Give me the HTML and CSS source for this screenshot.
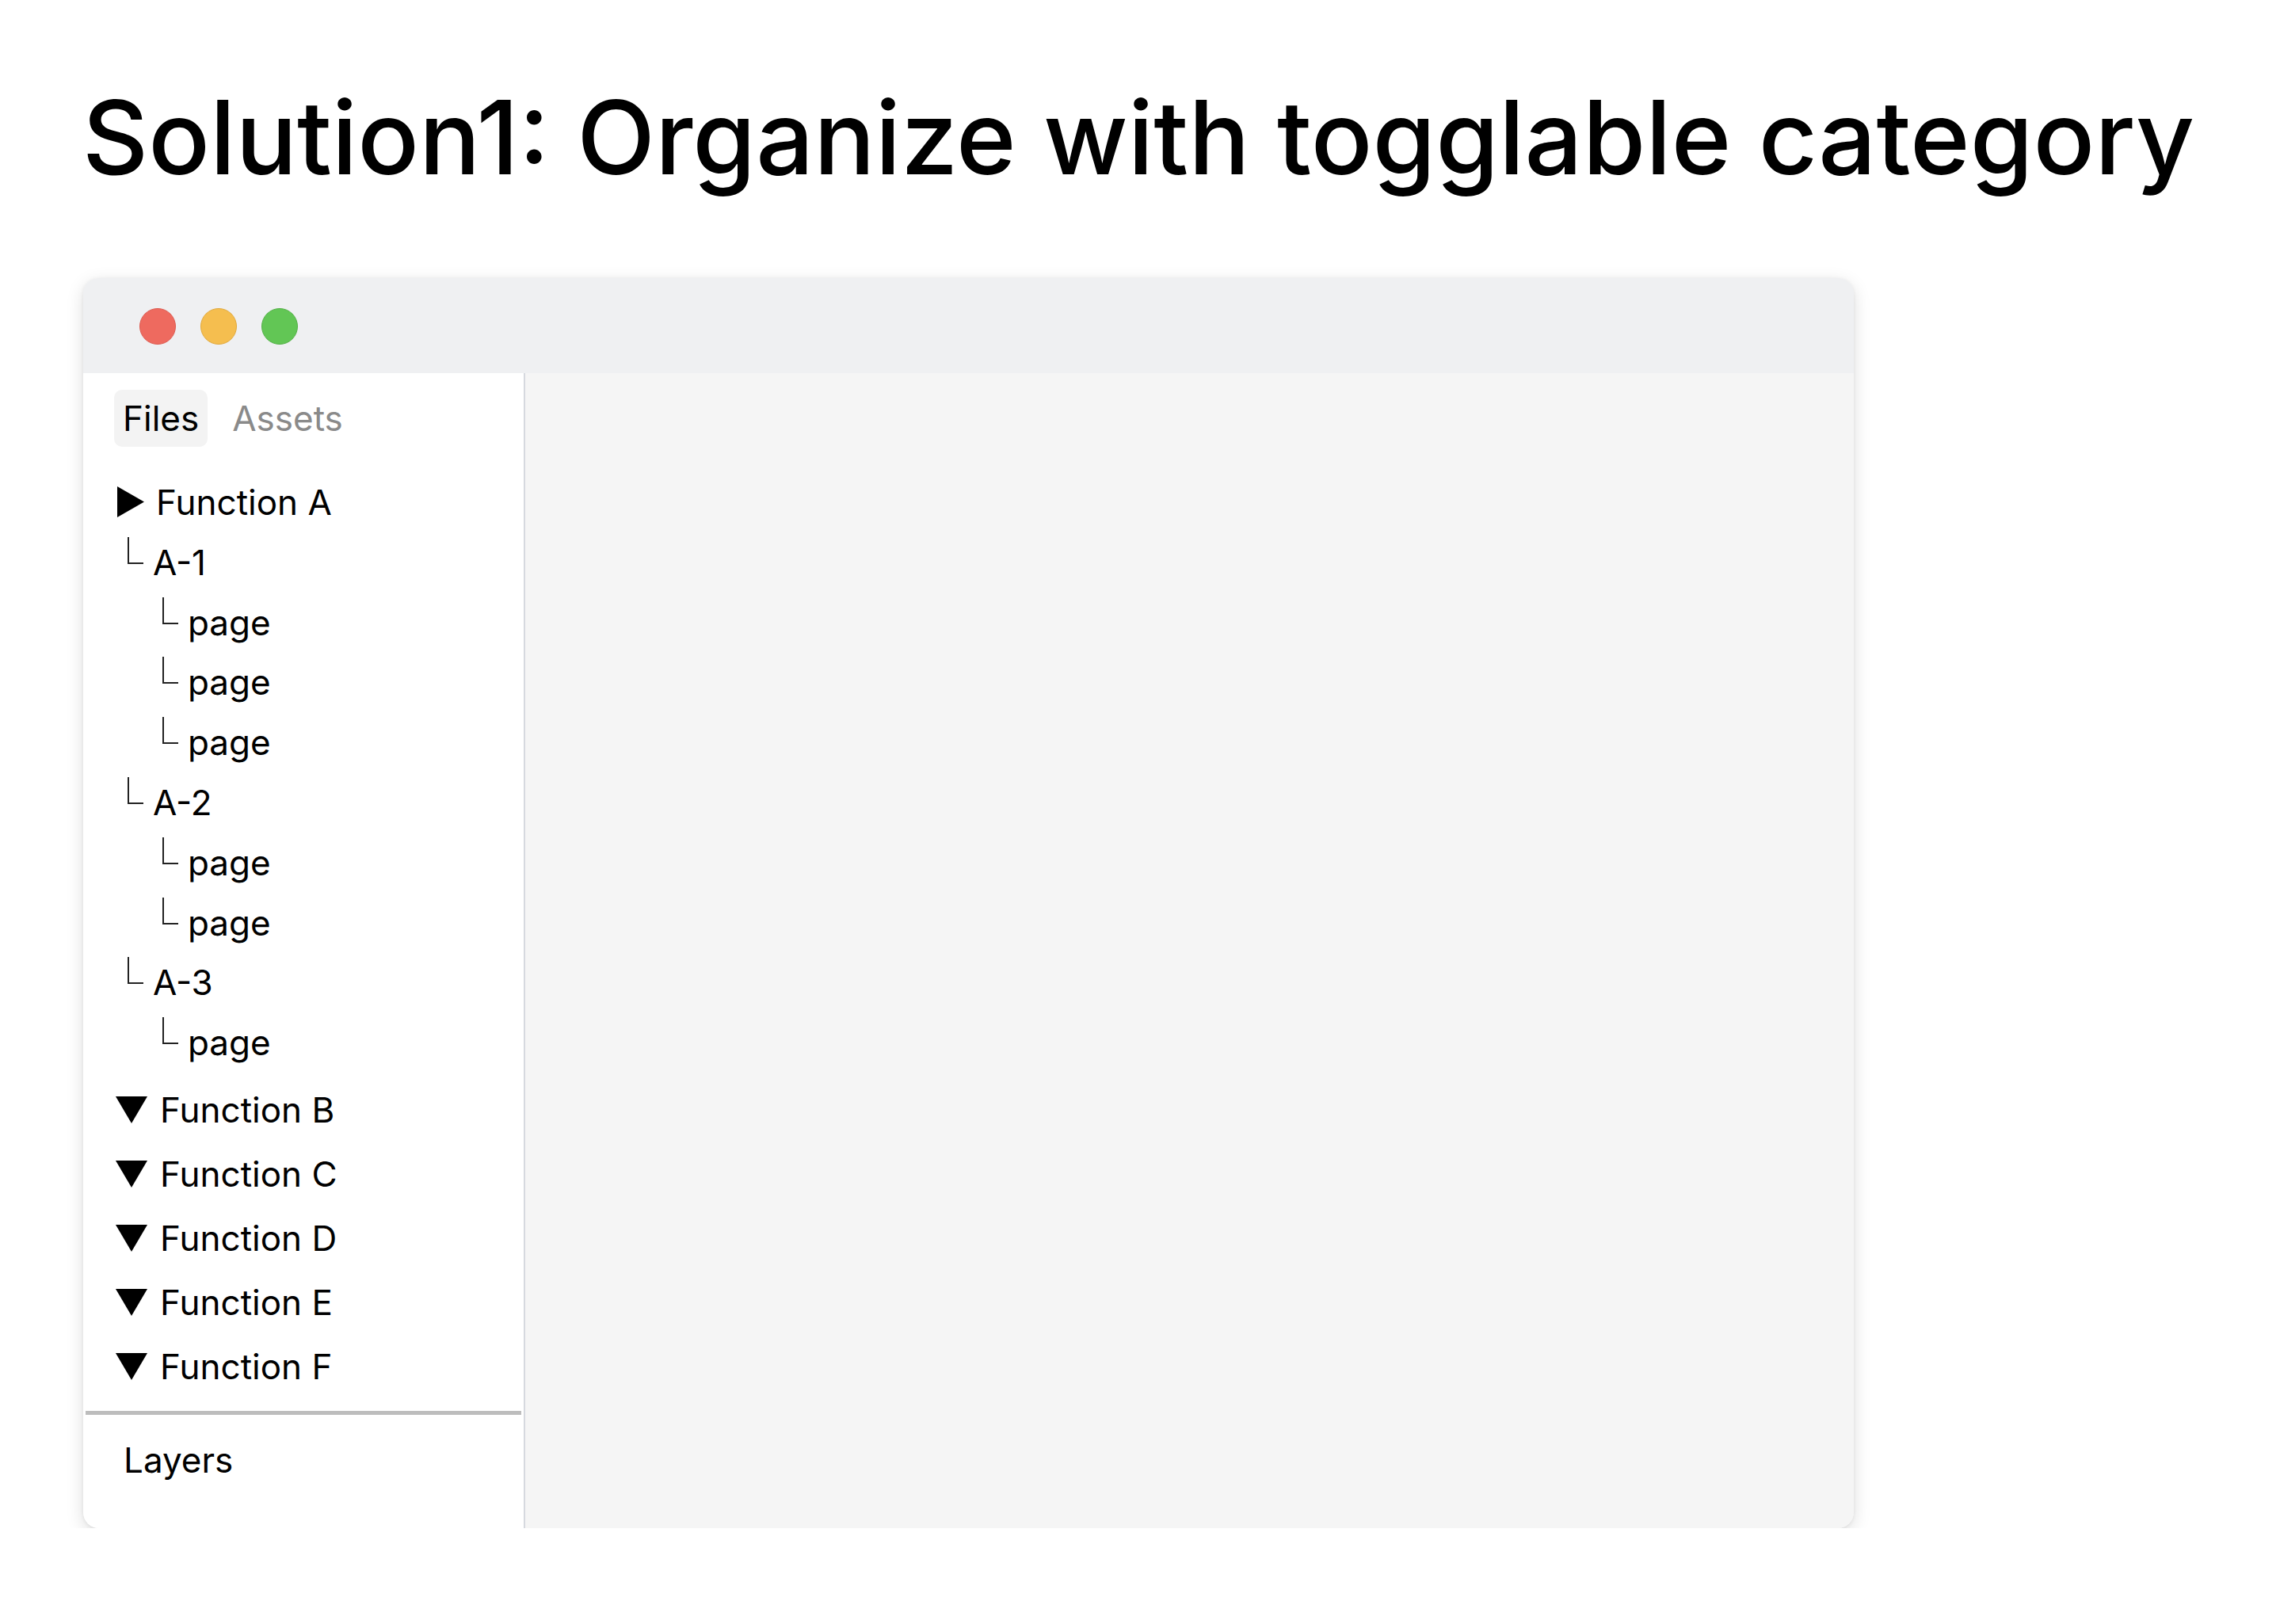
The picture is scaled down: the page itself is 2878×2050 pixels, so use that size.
FILE: index.html
```html
<!DOCTYPE html>
<html lang="en">
<head>
<meta charset="utf-8">
<title>Solution1: Organize with togglable category</title>
<link rel="stylesheet" href="styles.css">
</head>
<body>
<div class="page">
  <h1 class="title">Solution1: Organize with togglable category</h1>
  <div class="window">
    <div class="titlebar">
      <span class="light red"></span>
      <span class="light yellow"></span>
      <span class="light green"></span>
    </div>
    <div class="body">
      <aside class="sidebar">
        <div class="tabs">
          <span class="tab active">Files</span>
          <span class="tab">Assets</span>
        </div>
        <div class="tree">
          <div class="group open">
            <div class="row func first"><svg class="tri right" viewBox="0 0 34 39"><polygon points="0,0 34,19.5 0,39"/></svg>Function A</div>
            <div class="row l1"><span class="elbow"></span>A-1</div>
            <div class="row l2"><span class="elbow"></span>page</div>
            <div class="row l2"><span class="elbow"></span>page</div>
            <div class="row l2"><span class="elbow"></span>page</div>
            <div class="row l1"><span class="elbow"></span>A-2</div>
            <div class="row l2"><span class="elbow"></span>page</div>
            <div class="row l2"><span class="elbow"></span>page</div>
            <div class="row l1"><span class="elbow"></span>A-3</div>
            <div class="row l2"><span class="elbow"></span>page</div>
          </div>
          <div class="row func"><svg class="tri down" viewBox="0 0 40 34"><polygon points="0,0 40,0 20,34"/></svg>Function B</div>
          <div class="row func"><svg class="tri down" viewBox="0 0 40 34"><polygon points="0,0 40,0 20,34"/></svg>Function C</div>
          <div class="row func"><svg class="tri down" viewBox="0 0 40 34"><polygon points="0,0 40,0 20,34"/></svg>Function D</div>
          <div class="row func"><svg class="tri down" viewBox="0 0 40 34"><polygon points="0,0 40,0 20,34"/></svg>Function E</div>
          <div class="row func"><svg class="tri down" viewBox="0 0 40 34"><polygon points="0,0 40,0 20,34"/></svg>Function F</div>
        </div>
        <hr class="divider">
        <div class="layers">Layers</div>
      </aside>
      <main class="canvas"></main>
    </div>
  </div>
</div>
</body>
</html>
```

FILE: styles.css
```css
html, body {
  margin: 0;
  padding: 0;
  background: #ffffff;
}

body {
  font-family: "Inter", "Noto Sans", "Liberation Sans", sans-serif;
  color: #000;
}

.page {
  padding: 96px 0 0 105px;
}

.title {
  margin: 0 0 0 -1px;
  font-size: 128.8px;
  line-height: 154px;
  font-weight: 500;
  letter-spacing: 0;
  white-space: nowrap;
}

.window {
  margin-top: 101px;
  width: 2235px;
  height: 1578px;
  border-radius: 20px;
  overflow: hidden;
  background: #f5f5f5;
  box-shadow: 0 6px 22px rgba(0, 0, 0, 0.13), 0 1px 4px rgba(0, 0, 0, 0.08);
  display: flex;
  flex-direction: column;
}

.titlebar {
  height: 120px;
  flex: 0 0 120px;
  background: #eff0f2;
  display: flex;
  align-items: center;
  padding-left: 71px;
  padding-top: 2px;
  gap: 31px;
  box-sizing: border-box;
}

.light {
  width: 46px;
  height: 46px;
  border-radius: 50%;
  box-sizing: border-box;
}

.red {
  background: #ee6a5f;
  border: 1px solid #dd5a50;
}

.yellow {
  background: #f5be4f;
  border: 1px solid #e0a83c;
}

.green {
  background: #62c655;
  border: 1px solid #52b046;
}

.body {
  flex: 1;
  display: flex;
}

.sidebar {
  width: 556px;
  flex: 0 0 556px;
  background: #ffffff;
  border-right: 2px solid #d6d9df;
  padding-top: 21px;
  box-sizing: content-box;
  font-size: 44px;
}

.tabs {
  display: flex;
  align-items: center;
  margin-left: 39px;
  height: 72px;
}

.tab {
  line-height: 72px;
  color: #8a8a8a;
}

.tab.active {
  color: #000;
  background: #f3f3f3;
  border-radius: 10px;
  padding: 0 11px;
  margin-right: 31px;
}

.tree {
  margin-top: 33px;
}

.group {
  margin-bottom: 6px;
}

.row {
  height: 75.8px;
  line-height: 75.8px;
  white-space: nowrap;
}

.row.func {
  height: 81px;
  line-height: 81px;
  padding-left: 41px;
}

.row.func.first {
  height: 75.8px;
  line-height: 75.8px;
  padding-left: 43px;
}

.tri {
  display: inline-block;
  fill: #000;
}

.tri.right {
  width: 34px;
  height: 39px;
  margin-right: 15px;
  vertical-align: -3px;
}

.tri.down {
  width: 40px;
  height: 34px;
  margin-right: 16px;
  vertical-align: -1px;
}

.row.l1 {
  padding-left: 56px;
}

.row.l2 {
  padding-left: 100px;
}

.elbow {
  display: inline-block;
  width: 18px;
  height: 32px;
  border-left: 2px solid #222;
  border-bottom: 2px solid #222;
  margin-bottom: 14px;
  margin-right: 12px;
  vertical-align: baseline;
}

.divider {
  margin: 15px 3px 0 3px;
  height: 5px;
  border: 0;
  background: #bdbdbd;
}

.layers {
  margin-top: 19px;
  padding-left: 51px;
  line-height: 76px;
}

.canvas {
  flex: 1;
  background: #f5f5f5;
}
```
